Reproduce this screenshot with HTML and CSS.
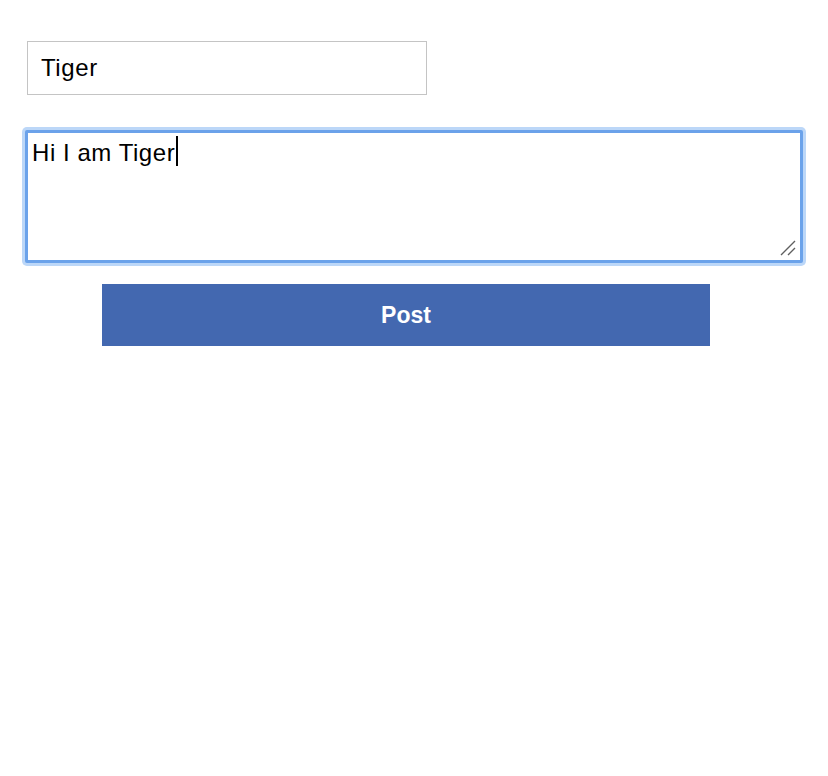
FILE: index.html
```html
<!DOCTYPE html>
<html>
<head>
<meta charset="utf-8">
<link rel="stylesheet" href="styles.css">
</head>
<body>
<form class="form">
  <input class="name-input" type="text" value="Tiger">
  <div class="message-wrap">
    <textarea class="message">Hi I am Tiger</textarea>
    <span class="caret"></span>
    <svg class="grip" width="16" height="16" viewBox="0 0 16 16">
      <path d="M1 15 L15 1 M8 15 L15 8" stroke="#5f5f5f" stroke-width="1.4" fill="none"/>
    </svg>
  </div>
  <button class="post-btn" type="button">Post</button>
</form>
</body>
</html>
```
FILE: styles.css
```css
html, body {
  margin: 0;
  padding: 0;
  background: #ffffff;
}
.form {
  display: flex;
  flex-direction: column;
  align-items: flex-start;
  padding-top: 41px;
  font-family: "Liberation Sans", Arial, sans-serif;
}
.name-input {
  box-sizing: border-box;
  margin: 0 0 0 27px;
  width: 400px;
  height: 54px;
  border: 1px solid #c4c4c4;
  border-radius: 0;
  padding: 0 12px 0 13px;
  font-family: "Liberation Sans", Arial, sans-serif;
  font-size: 24px;
  letter-spacing: 0.6px;
  color: #000;
  outline: none;
  background: #fff;
}
.message-wrap {
  position: relative;
  margin: 35px 0 0 25px;
  width: 778px;
  height: 133px;
}
.message {
  display: block;
  box-sizing: border-box;
  margin: 0;
  width: 778px;
  height: 133px;
  border: 3px solid #6ba2ea;
  border-radius: 2px;
  box-shadow: 0 0 0 3px #bcd7f8;
  outline: none;
  padding: 6px 4px;
  font-family: "Liberation Sans", Arial, sans-serif;
  font-size: 24px;
  letter-spacing: 0.55px;
  line-height: 28px;
  color: #000;
  resize: none;
  background: #fff;
}
.caret {
  position: absolute;
  left: 151px;
  top: 6px;
  width: 2px;
  height: 30px;
  background: #000;
}
.grip {
  position: absolute;
  right: 7px;
  bottom: 7px;
}
.post-btn {
  margin: 21px 0 0 102px;
  width: 608px;
  height: 62px;
  border: none;
  border-radius: 0;
  background: #4368b0;
  color: #ffffff;
  font-family: "Liberation Sans", Arial, sans-serif;
  font-weight: bold;
  font-size: 23px;
  padding: 0;
  cursor: pointer;
}
```
